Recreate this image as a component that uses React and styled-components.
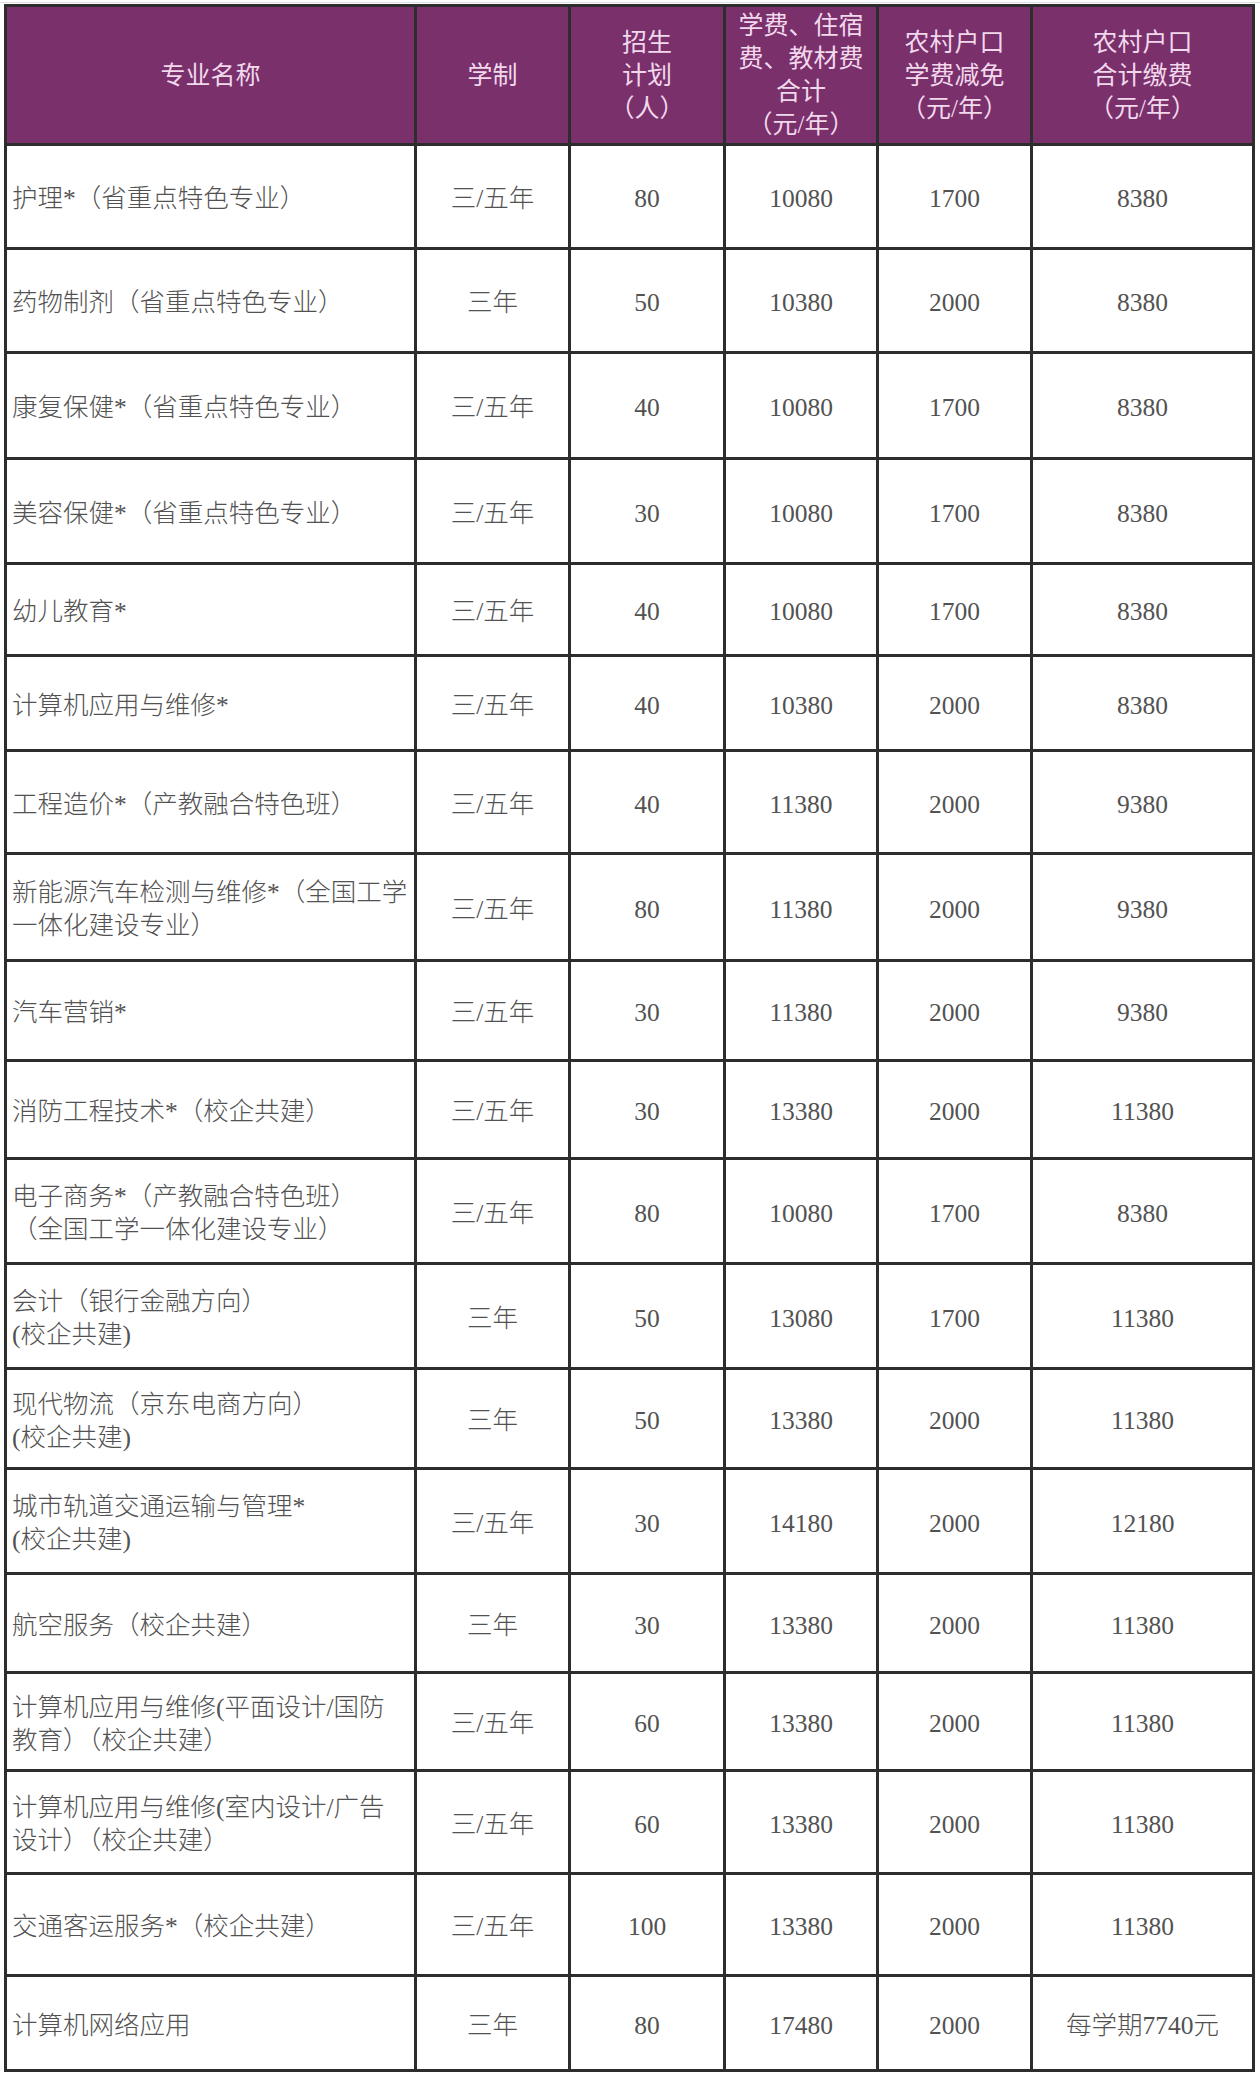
import styled, { createGlobalStyle } from 'styled-components'

const GlobalStyle = createGlobalStyle`
  html, body {
    margin: 0;
    padding: 0;
    background: #ffffff;
  }
`

const columns = [407, 151, 152, 150, 151, 219]

const headers = [
  ['专业名称'],
  ['学制'],
  ['招生', '计划', '（人）'],
  ['学费、住宿', '费、教材费', '合计', '（元/年）'],
  ['农村户口', '学费减免', '（元/年）'],
  ['农村户口', '合计缴费', '（元/年）'],
]

const rows = [
  { h: 101, cells: [['护理*（省重点特色专业）'], '三/五年', '80', '10080', '1700', '8380'] },
  { h: 101, cells: [['药物制剂（省重点特色专业）'], '三年', '50', '10380', '2000', '8380'] },
  { h: 103, cells: [['康复保健*（省重点特色专业）'], '三/五年', '40', '10080', '1700', '8380'] },
  { h: 102, cells: [['美容保健*（省重点特色专业）'], '三/五年', '30', '10080', '1700', '8380'] },
  { h: 89, cells: [['幼儿教育*'], '三/五年', '40', '10080', '1700', '8380'] },
  { h: 92, cells: [['计算机应用与维修*'], '三/五年', '40', '10380', '2000', '8380'] },
  { h: 100, cells: [['工程造价*（产教融合特色班）'], '三/五年', '40', '11380', '2000', '9380'] },
  { h: 104, cells: [['新能源汽车检测与维修*（全国工学', '一体化建设专业）'], '三/五年', '80', '11380', '2000', '9380'] },
  { h: 97, cells: [['汽车营销*'], '三/五年', '30', '11380', '2000', '9380'] },
  { h: 95, cells: [['消防工程技术*（校企共建）'], '三/五年', '30', '13380', '2000', '11380'] },
  { h: 102, cells: [['电子商务*（产教融合特色班）', '（全国工学一体化建设专业）'], '三/五年', '80', '10080', '1700', '8380'] },
  { h: 102, cells: [['会计（银行金融方向）', '(校企共建)'], '三年', '50', '13080', '1700', '11380'] },
  { h: 97, cells: [['现代物流（京东电商方向）', '(校企共建)'], '三年', '50', '13380', '2000', '11380'] },
  { h: 102, cells: [['城市轨道交通运输与管理*', '(校企共建)'], '三/五年', '30', '14180', '2000', '12180'] },
  { h: 96, cells: [['航空服务（校企共建）'], '三年', '30', '13380', '2000', '11380'] },
  { h: 95, cells: [['计算机应用与维修(平面设计/国防', '教育）（校企共建）'], '三/五年', '60', '13380', '2000', '11380'] },
  { h: 100, cells: [['计算机应用与维修(室内设计/广告', '设计）（校企共建）'], '三/五年', '60', '13380', '2000', '11380'] },
  { h: 99, cells: [['交通客运服务*（校企共建）'], '三/五年', '100', '13380', '2000', '11380'] },
  { h: 92, cells: [['计算机网络应用'], '三年', '80', '17480', '2000', '每学期7740元'] },
]

const Page = styled.div`
  padding-top: 2px;
  padding-left: 4px;
`

const Frame = styled.div`
  border-top: 1px solid #dcdcdc;
  margin-left: -4px;
  padding-top: 1px;
  padding-left: 4px;
`

const Sheet = styled.div`
  display: grid;
  grid-template-columns: ${props => props.cols};
  grid-template-rows: ${props => props.rows};
  gap: 3px;
  padding: 3px;
  width: max-content;
  background: #2d2d2d;
  font-family: "Liberation Serif", "Noto Sans CJK SC", serif;
`

const HeadCell = styled.div`
  display: flex;
  flex-direction: column;
  align-items: center;
  justify-content: center;
  background: #7a306b;
  color: #f1d8ec;
  font-size: 25px;
  line-height: 33px;
  text-align: center;
  white-space: nowrap;
`

const Cell = styled.div`
  display: flex;
  flex-direction: column;
  justify-content: center;
  align-items: ${props => (props.$left ? 'flex-start' : 'center')};
  padding-left: ${props => (props.$left ? '5px' : '0')};
  padding-top: 4px;
  background: #ffffff;
  color: #525252;
  font-size: 25.5px;
  font-weight: 300;
  line-height: 33px;
  white-space: nowrap;
  overflow: visible;
`

const Line = styled.span`
  display: block;
`

export default function App() {
  const cols = columns.map(w => `${w}px`).join(' ')
  const rowTemplate = ['136px', ...rows.map(r => `${r.h}px`)].join(' ')

  return (
    <>
      <GlobalStyle />
      <Page>
        <Frame>
          <Sheet cols={cols} rows={rowTemplate}>
            {headers.map((lines, i) => (
              <HeadCell key={`h${i}`}>
                {lines.map((l, j) => (
                  <Line key={j}>{l}</Line>
                ))}
              </HeadCell>
            ))}
            {rows.map((row, r) =>
              row.cells.map((value, c) =>
                c === 0 ? (
                  <Cell key={`${r}-${c}`} $left>
                    {value.map((l, j) => (
                      <Line key={j}>{l}</Line>
                    ))}
                  </Cell>
                ) : (
                  <Cell key={`${r}-${c}`}>{value}</Cell>
                )
              )
            )}
          </Sheet>
        </Frame>
      </Page>
    </>
  )
}
